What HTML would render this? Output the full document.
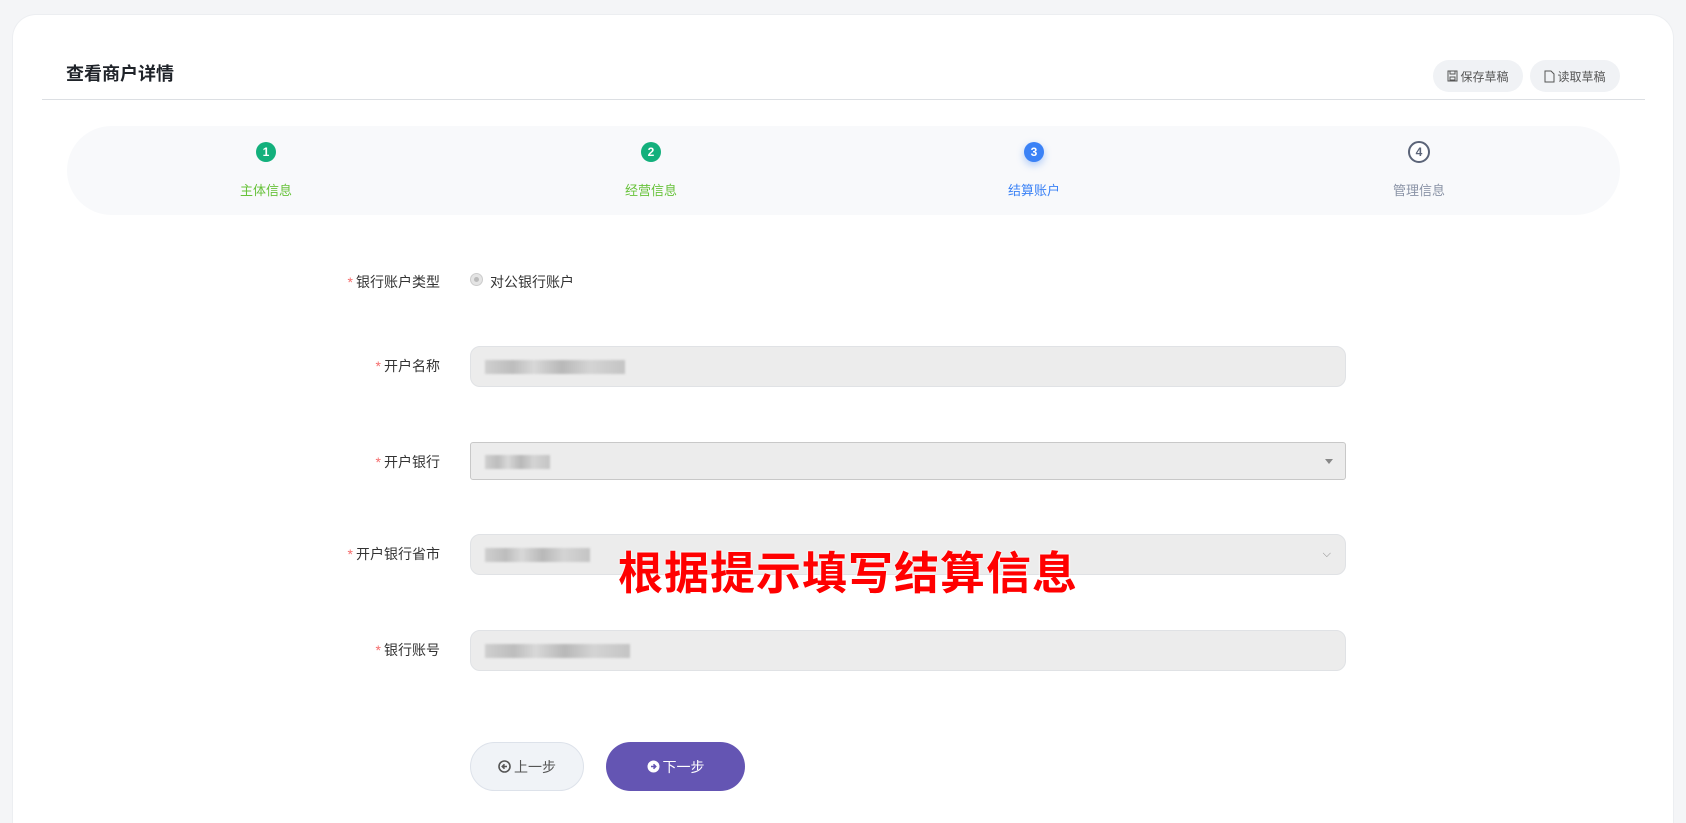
<!DOCTYPE html>
<html style="height:823px;overflow:hidden"><head><meta charset="utf-8"><style>
*{box-sizing:border-box;margin:0;padding:0}
body{width:1686px;height:823px;background:#f4f5f7;font-family:"Liberation Sans","Noto Sans CJK SC",sans-serif;position:relative;overflow:hidden;color:#333}
.card{position:absolute;left:12px;top:14px;width:1662px;height:809px;background:#fff;border-radius:24px 24px 0 0;border:1px solid #eceef1;border-bottom:none}
.abs{position:absolute}
.title{left:66px;top:60px;font-size:18px;font-weight:bold;color:#1f2329}
.hr{left:42px;top:99px;width:1603px;height:1px;background:#dcdfe3}
.dbtn{top:60px;height:32px;width:90px;border-radius:16px;background:#f0f2f5;font-size:12px;color:#555;display:flex;align-items:center;justify-content:center;gap:2px}
.band{left:67px;top:126px;width:1553px;height:89px;background:#f8f9fb;border-radius:45px}
.circ{width:20px;height:20px;border-radius:50%;font-size:12px;font-weight:bold;color:#fff;display:flex;align-items:center;justify-content:center;top:142px}
.slab{top:180px;font-size:13px;width:120px;text-align:center}
.lab{width:200px;text-align:right;font-size:14px;color:#333;left:240px}
.lab b{color:#f56c6c;font-weight:normal;margin-right:3px}
.inp{left:470px;width:876px;height:41px;background:#ececec;border:1px solid #e0e2e5;border-radius:10px}
.blur{position:absolute;top:13px;height:14px;left:14px;background:linear-gradient(90deg,#cfcfcf,#bdbdbd 20%,#d8d8d8 35%,#b8b8b8 55%,#d4d4d4 75%,#c4c4c4);filter:blur(1px)}
.btn{top:742px;height:49px;border-radius:25px;display:flex;align-items:center;justify-content:center;font-size:14px;gap:3px}
.big{left:618px;top:537px;font-size:45px;font-weight:bold;color:#ff0000;letter-spacing:1px;text-shadow:0 0 2px #fff,0 0 2px #fff}
</style></head><body>
<div class="card"></div>
<div class="abs title">查看商户详情</div>
<div class="abs hr"></div>
<div class="abs dbtn" style="left:1433px"><svg width="11" height="12" viewBox="0 0 11 12"><rect x="1" y="1" width="9" height="10" fill="none" stroke="#555"/><rect x="3" y="1" width="5" height="3" fill="none" stroke="#555"/><rect x="3" y="7" width="5" height="3" fill="none" stroke="#555"/></svg>保存草稿</div>
<div class="abs dbtn" style="left:1530px"><svg width="11" height="13" viewBox="0 0 11 13"><path d="M1 1h6l3 3v8H1z" fill="none" stroke="#555"/></svg>读取草稿</div>
<div class="abs band"></div>
<div class="abs circ" style="left:256px;background:#13b07c">1</div>
<div class="abs circ" style="left:641px;background:#13b07c">2</div>
<div class="abs circ" style="left:1024px;background:#3b82f6;box-shadow:0 3px 8px rgba(59,130,246,.4)">3</div>
<div class="abs circ" style="left:1408px;width:22px;height:22px;top:141px;background:#fff;border:2px solid #5b6478;color:#5b6478">4</div>
<div class="abs slab" style="left:206px;color:#67c23a">主体信息</div>
<div class="abs slab" style="left:591px;color:#67c23a">经营信息</div>
<div class="abs slab" style="left:974px;color:#3b82f6">结算账户</div>
<div class="abs slab" style="left:1359px;color:#8a93a6">管理信息</div>

<div class="abs lab" style="top:272px"><b>*</b>银行账户类型</div>
<div class="abs" style="left:470px;top:273px;width:13px;height:13px;border-radius:50%;background:#e4e4e4;border:1px solid #ccc"><div style="margin:3px;width:5px;height:5px;border-radius:50%;background:#bbb"></div></div>
<div class="abs" style="left:490px;top:272px;font-size:14px;color:#333">对公银行账户</div>

<div class="abs lab" style="top:356px"><b>*</b>开户名称</div>
<div class="abs inp" style="top:346px"><div class="blur" style="width:140px"></div></div>
<div class="abs lab" style="top:452px"><b>*</b>开户银行</div>
<div class="abs inp" style="top:442px;height:38px;border-radius:3px;border-color:#c8c8c8"><div class="blur" style="width:65px;top:12px"></div><div style="position:absolute;right:12px;top:16px;border:4px solid transparent;border-top:5px solid #888"></div></div>
<div class="abs lab" style="top:544px"><b>*</b>开户银行省市</div>
<div class="abs inp" style="top:534px"><div class="blur" style="width:105px"></div><div style="position:absolute;right:14px;top:13px;font-size:11px;color:#888">⌵</div></div>
<div class="abs lab" style="top:640px"><b>*</b>银行账号</div>
<div class="abs inp" style="top:630px"><div class="blur" style="width:145px"></div></div>

<div class="abs big">根据提示填写结算信息</div>

<div class="abs btn" style="left:470px;width:114px;background:#f0f3f7;border:1px solid #dde2ea;color:#555"><svg width="13" height="13" viewBox="0 0 13 13"><circle cx="6.5" cy="6.5" r="5.5" fill="none" stroke="#555" stroke-width="1.6"/><path d="M9 6.5H4.5M6.5 4.3L4.3 6.5 6.5 8.7" stroke="#555" stroke-width="1.6" fill="none"/></svg>上一步</div>
<div class="abs btn" style="left:606px;width:139px;background:#6455b3;color:#fff"><svg width="13" height="13" viewBox="0 0 13 13"><circle cx="6.5" cy="6.5" r="6" fill="#fff"/><path d="M4 6.5h4.5M6.5 4.3l2.2 2.2-2.2 2.2" stroke="#6455b3" stroke-width="1.6" fill="none"/></svg>下一步</div>
</body></html>
